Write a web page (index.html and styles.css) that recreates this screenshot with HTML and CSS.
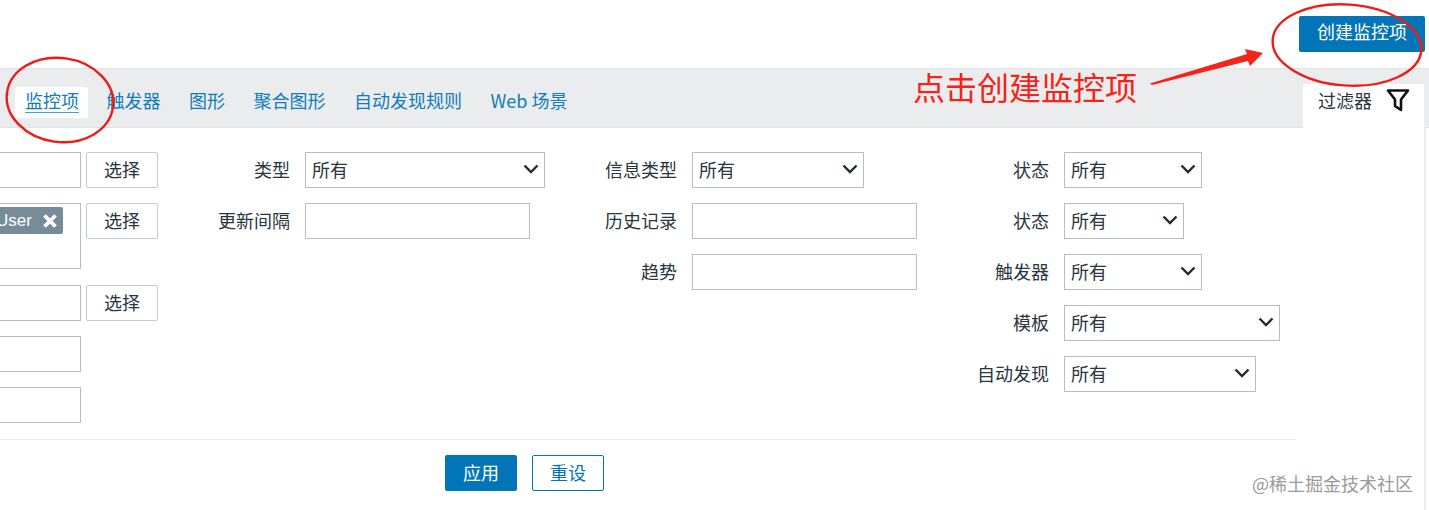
FILE: index.html
```html
<!DOCTYPE html>
<html lang="zh">
<head>
<meta charset="utf-8">
<title>监控项</title>
<link rel="stylesheet" href="styles.css">
</head>
<body>
<div class="page">
  <header class="topbar">
    <button class="btn btn-primary btn-create">创建监控项</button>
  </header>
  <nav class="tabs">
    <div class="tab-list">
      <a class="tab tab-active"><span>监控项</span></a>
      <a class="tab">触发器</a>
      <a class="tab">图形</a>
      <a class="tab">聚合图形</a>
      <a class="tab">自动发现规则</a>
      <a class="tab">Web 场景</a>
    </div>
    <div class="filter-tab">
      <span>过滤器</span>
      <svg class="filter-icon" width="24" height="24" viewBox="0 0 24 24"><path d="M2 2.5H22L15 11.5V22L9 18V11.5Z" fill="none" stroke="#111" stroke-width="2.6" stroke-linejoin="round"/></svg>
    </div>
  </nav>
  <main class="panel">
    <div class="filter-form">
      <div class="col col-first">
        <div class="row"><div class="input input-cut"></div><button class="btn btn-plain">选择</button></div>
        <div class="row row-tall">
          <div class="input input-cut input-tall"><span class="tag">User<svg class="tag-x" width="16" height="16" viewBox="0 0 16 16"><path d="M2.5 2.5L13.5 13.5M13.5 2.5L2.5 13.5" stroke="#fff" stroke-width="3.8"/></svg></span></div>
          <button class="btn btn-plain">选择</button>
        </div>
        <div class="row"><div class="input input-cut"></div><button class="btn btn-plain">选择</button></div>
        <div class="row"><div class="input input-cut"></div></div>
        <div class="row"><div class="input input-cut"></div></div>
      </div>
      <div class="col">
        <div class="row"><label class="label">类型</label><div class="select w240">所有<svg class="chev" width="16" height="10" viewBox="0 0 16 10"><path d="M1.5 1.5L8 8L14.5 1.5" fill="none" stroke="#1f2c33" stroke-width="2.4"/></svg></div></div>
        <div class="row"><label class="label">更新间隔</label><div class="input w225"></div></div>
      </div>
      <div class="col">
        <div class="row"><label class="label">信息类型</label><div class="select w172">所有<svg class="chev" width="16" height="10" viewBox="0 0 16 10"><path d="M1.5 1.5L8 8L14.5 1.5" fill="none" stroke="#1f2c33" stroke-width="2.4"/></svg></div></div>
        <div class="row"><label class="label">历史记录</label><div class="input w225"></div></div>
        <div class="row"><label class="label">趋势</label><div class="input w225"></div></div>
      </div>
      <div class="col">
        <div class="row"><label class="label">状态</label><div class="select w138">所有<svg class="chev" width="16" height="10" viewBox="0 0 16 10"><path d="M1.5 1.5L8 8L14.5 1.5" fill="none" stroke="#1f2c33" stroke-width="2.4"/></svg></div></div>
        <div class="row"><label class="label">状态</label><div class="select w120">所有<svg class="chev" width="16" height="10" viewBox="0 0 16 10"><path d="M1.5 1.5L8 8L14.5 1.5" fill="none" stroke="#1f2c33" stroke-width="2.4"/></svg></div></div>
        <div class="row"><label class="label">触发器</label><div class="select w138">所有<svg class="chev" width="16" height="10" viewBox="0 0 16 10"><path d="M1.5 1.5L8 8L14.5 1.5" fill="none" stroke="#1f2c33" stroke-width="2.4"/></svg></div></div>
        <div class="row"><label class="label">模板</label><div class="select w216">所有<svg class="chev" width="16" height="10" viewBox="0 0 16 10"><path d="M1.5 1.5L8 8L14.5 1.5" fill="none" stroke="#1f2c33" stroke-width="2.4"/></svg></div></div>
        <div class="row"><label class="label">自动发现</label><div class="select w192">所有<svg class="chev" width="16" height="10" viewBox="0 0 16 10"><path d="M1.5 1.5L8 8L14.5 1.5" fill="none" stroke="#1f2c33" stroke-width="2.4"/></svg></div></div>
      </div>
    </div>
    <div class="form-footer">
      <button class="btn btn-primary btn-apply">应用</button>
      <button class="btn btn-outline">重设</button>
    </div>
  </main>
  <svg class="marks" width="1429" height="510" viewBox="0 0 1429 510">
    <ellipse cx="60" cy="100" rx="53.5" ry="42" transform="rotate(8 60 100)" fill="none" stroke="#ee1c17" stroke-width="2.4"/>
    <ellipse cx="1347" cy="45" rx="74.5" ry="40.5" transform="rotate(4 1347 45)" fill="none" stroke="#ee1c17" stroke-width="2.4"/>
    <polygon points="1150,83.5 1247,54 1245,49 1263,53 1250,66 1248,61 1152,85" fill="#f5231a"/>
  </svg>
  <div class="note">点击创建监控项</div>
  <div class="watermark">@稀土掘金技术社区</div>
</div>
</body>
</html>
```
FILE: styles.css
```css
* { box-sizing: border-box; }
html, body { margin: 0; padding: 0; background: #fff; }
.page {
  position: relative;
  width: 1429px;
  height: 510px;
  overflow: hidden;
  background: #fff;
  color: #2a363d;
  font: 18px/24px "Noto Sans CJK SC", "Noto Sans", sans-serif;
}
.topbar {
  height: 68px;
  padding: 16px 4px 0 0;
  display: flex;
  justify-content: flex-end;
  align-items: flex-start;
}
.btn {
  height: 36px;
  padding: 0 0 2px;
  border: 1px solid transparent;
  border-radius: 2px;
  background: none;
  font: inherit;
  cursor: pointer;
}
.btn-primary { background: #0275b8; color: #fff; }
.btn-create { width: 126px; padding-bottom: 6px; }
.btn-apply { width: 72px; }
.btn-outline { width: 72px; border-color: #0275b8; color: #0275b8; }
.btn-plain { width: 72px; height: 36px; border-color: #c3c9cc; color: #2a363d; }
.tabs {
  height: 60px;
  padding-right: 3px;
  display: flex;
  justify-content: space-between;
  background: #ebeced;
  border-top: 1px solid #e2e4e5;
  border-bottom: 1px solid #dfe1e2;
}
.tab-list {
  display: flex;
  align-items: flex-start;
  gap: 8.5px;
  padding: 18px 0 0 15px;
}
.tab {
  height: 31px;
  padding: 0 10px;
  line-height: 27px;
  color: #0f7cbc;
}
.tab-active {
  padding-right: 9px;
  background: #fff;
  border-radius: 3px;
}
.tab-active span {
  display: block;
  height: 26px;
  line-height: 27px;
  border-bottom: 1px solid #4a9bd0;
}
.filter-tab {
  width: 123px;
  height: 45px;
  margin: 15px 0 -1px;
  padding: 0 14px 14px 15px;
  display: flex;
  align-items: center;
  justify-content: space-between;
  background: #fff;
  border-radius: 2px 2px 0 0;
  border-right: 2px solid #ebeced;
}
.panel {
  width: 1426px;
  height: 382px;
  border-right: 2px solid #ebeced;
}
.filter-form {
  display: flex;
  align-items: flex-start;
  padding-top: 24px;
  height: 311px;
}
.col {
  width: 387px;
  display: flex;
  flex-direction: column;
  gap: 15px;
}
.col-first { width: 158px; }
.col:nth-child(3) { width: 372px; }
.col:last-child { width: 363px; }
.row {
  height: 36px;
  display: flex;
  gap: 15px;
  align-items: flex-start;
}
.col-first .row { gap: 5px; }
.col-first .row-tall { height: 67px; }
.label {
  width: 132px;
  text-align: right;
  line-height: 34px;
  flex: none;
}
.input, .select {
  height: 36px;
  flex: none;
  border: 1px solid #b8bdc0;
  background: #fff;
}
.input-cut { width: 81px; border-left: none; }
.input-tall {
  height: 66px;
  padding: 3px 17px 0 0;
  display: flex;
  justify-content: flex-end;
  align-items: flex-start;
  overflow: hidden;
}
.tag {
  height: 27px;
  padding: 0 5px 0 0;
  flex: none;
  display: flex;
  align-items: center;
  gap: 10px;
  background: #768d99;
  border-radius: 2px;
  color: #fff;
  font: 17px/27px "Liberation Sans", sans-serif;
}
.tag-x { flex: none; }
.select {
  padding: 0 5px 2px 6px;
  display: flex;
  align-items: center;
  justify-content: space-between;
}
.w120 { width: 120px; }
.w138 { width: 138px; }
.w172 { width: 172px; }
.w192 { width: 192px; }
.w216 { width: 216px; }
.w225 { width: 225px; }
.w240 { width: 240px; }
.form-footer {
  width: 1296px;
  height: 60px;
  padding: 15px 0 0 445px;
  display: flex;
  gap: 15px;
  border-top: 1px solid #ebeced;
}
.marks {
  position: absolute;
  top: 0;
  left: 0;
  pointer-events: none;
}
.note {
  position: absolute;
  left: 913px;
  top: 64px;
  color: #f5231a;
  font-size: 32px;
  line-height: 44px;
  white-space: nowrap;
}
.watermark {
  position: absolute;
  left: 1252px;
  top: 471px;
  color: #9a9a9a;
  font-size: 18px;
  line-height: 24px;
  white-space: nowrap;
}
```
